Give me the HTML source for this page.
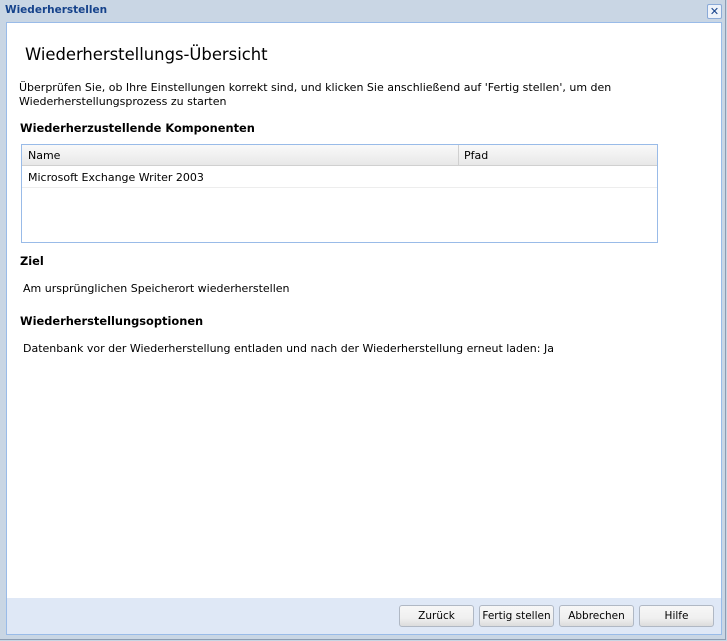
<!DOCTYPE html>
<html><head><meta charset="utf-8"><style>
body{margin:0;width:727px;height:641px;overflow:hidden;background:#c9d6e4;font-family:"DejaVu Sans","Liberation Sans",sans-serif;font-size:11px;color:#000;position:relative}
.frame{position:absolute;left:0;top:0;width:725px;height:639px;border-right:1px solid #8c9db3;border-bottom:1px solid #8c9db3}
.title{position:absolute;left:5px;top:4px;font-weight:bold;color:#15428b;font-size:10.5px}
.close{position:absolute;left:707px;top:4px;width:13px;height:13px;border:1px solid #8aaad8;background:#eef3fa;border-radius:2px;color:#15428b;font-size:11px;line-height:13px;text-align:center}
.inner{position:absolute;left:6px;top:22px;width:714px;height:611px;border:1px solid #99bbe8;background:#fff}
.footer{position:absolute;left:0;top:575px;width:714px;height:36px;background:#dfe8f6}
.abs{position:absolute;white-space:nowrap}
h1{position:absolute;left:18px;top:22px;margin:0;font-weight:normal;font-size:16.4px}
.b{font-weight:bold;font-size:11.4px}
.grid{position:absolute;left:14px;top:121px;width:635px;height:97px;border:1px solid #99bbe8}
.gh{height:20px;background:linear-gradient(#f9f9f9,#e8e8e8);border-bottom:1px solid #d0d0d0;position:relative}
.btn{position:absolute;height:20px;border:1px solid #b0b8c4;border-radius:3px;background:linear-gradient(#f7f7f7 0,#f0f0f0 60%,#dcdcdc 100%);text-align:center;line-height:20px;font-size:10.5px}
</style></head><body>
<div class="frame"></div>
<div class="title">Wiederherstellen</div>
<div class="close">✕</div>
<div class="inner">
<h1>Wiederherstellungs-Übersicht</h1>
<div class="abs" style="left:12px;top:58px">Überprüfen Sie, ob Ihre Einstellungen korrekt sind, und klicken Sie anschließend auf 'Fertig stellen', um den</div>
<div class="abs" style="left:12px;top:72px">Wiederherstellungsprozess zu starten</div>
<div class="abs b" style="left:13px;top:98px">Wiederherzustellende Komponenten</div>
<div class="grid">
 <div class="gh"><span class="abs" style="left:6px;top:4px">Name</span><span class="abs" style="left:436px;top:0;height:20px;border-left:1px solid #d0d0d0"></span><span class="abs" style="left:442px;top:4px">Pfad</span></div>
 <div style="height:21px;border-bottom:1px solid #ededed;position:relative"><span class="abs" style="left:6px;top:5px">Microsoft Exchange Writer 2003</span></div>
</div>
<div class="abs b" style="left:13px;top:231px">Ziel</div>
<div class="abs" style="left:16px;top:259px">Am ursprünglichen Speicherort wiederherstellen</div>
<div class="abs b" style="left:13px;top:291px">Wiederherstellungsoptionen</div>
<div class="abs" style="left:16px;top:319px">Datenbank vor der Wiederherstellung entladen und nach der Wiederherstellung erneut laden: Ja</div>
<div class="footer"></div>
</div>
<div class="btn" style="left:399px;top:605px;width:73px">Zurück</div>
<div class="btn" style="left:479px;top:605px;width:73px">Fertig stellen</div>
<div class="btn" style="left:559px;top:605px;width:73px">Abbrechen</div>
<div class="btn" style="left:639px;top:605px;width:73px">Hilfe</div>
</body></html>
